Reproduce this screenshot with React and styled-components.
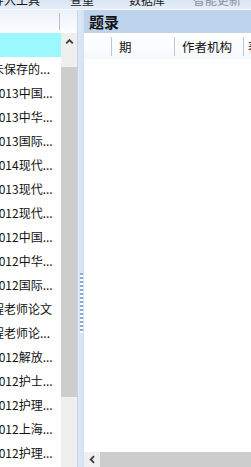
import React from "react";
import styled, { createGlobalStyle } from "styled-components";

const Global = createGlobalStyle`
  html, body { margin: 0; padding: 0; background: #ffffff; overflow: hidden; }
  body { font-family: "Noto Sans CJK SC", "Noto Sans", sans-serif; }
`;

const Window = styled.div`
  width: 251px;
  height: 467px;
  display: flex;
  flex-direction: column;
  overflow: hidden;
  background: #ffffff;
`;

const Toolbar = styled.div`
  height: 9px;
  flex: none;
  display: flex;
  align-items: flex-start;
  background: linear-gradient(#d9e5f4, #e6eef9);
  border-bottom: 1px solid #f4f8fd;
  overflow: hidden;
`;

const ToolItem = styled.span`
  flex: none;
  margin-left: ${(p) => p.$offset}px;
  margin-top: -6px;
  font-size: 12px;
  line-height: 12px;
  white-space: nowrap;
  color: ${(p) => (p.$disabled ? "#8a8f97" : "#1a1a1a")};
`;

const Main = styled.div`
  flex: 1;
  display: flex;
  min-height: 0;
`;

const LeftPane = styled.div`
  width: 77px;
  flex: none;
  display: flex;
  flex-direction: column;
  overflow: hidden;
`;

const LeftHeader = styled.div`
  height: 23px;
  flex: none;
  display: flex;
  align-items: center;
  background: linear-gradient(#edf2f9, #fbfdff);
`;

const HeaderSep = styled.div`
  width: 1px;
  height: 17px;
  margin-left: ${(p) => p.$at}px;
  background: #b4c0d0;
`;

const LeftBody = styled.div`
  flex: 1;
  display: flex;
  min-height: 0;
`;

const List = styled.div`
  width: 61px;
  flex: none;
  display: flex;
  flex-direction: column;
  overflow: hidden;
`;

const Row = styled.div`
  height: 24px;
  flex: none;
  display: flex;
  align-items: center;
  background: ${(p) => (p.$selected ? "#9cf8ff" : "transparent")};
`;

const RowText = styled.span`
  margin-left: -8px;
  font-size: 12px;
  line-height: 24px;
  white-space: nowrap;
  color: #111111;
`;

const VScroll = styled.div`
  width: 16px;
  flex: none;
  display: flex;
  flex-direction: column;
  background: #efefef;
`;

const ArrowButton = styled.div`
  height: ${(p) => p.$h}px;
  width: ${(p) => p.$w || 16}px;
  flex: none;
  display: flex;
  align-items: center;
  justify-content: center;
  background: #efefef;
`;

const VThumb = styled.div`
  margin-top: 17px;
  height: 330px;
  flex: none;
  background: #cdcdcd;
`;

const Splitter = styled.div`
  width: 6px;
  flex: none;
  display: flex;
  flex-direction: column;
  align-items: center;
  border-left: 1px solid #c9d5e6;
  background: linear-gradient(90deg, #dfe9f6, #d3e1f3);
`;

const Grip = styled.div`
  margin-top: 263px;
  width: 3px;
  height: 60px;
  background-image: linear-gradient(#8ea9d6 0 2px, #ffffff 2px 4px);
  background-size: 3px 4px;
`;

const RightPane = styled.div`
  flex: 1;
  display: flex;
  flex-direction: column;
  min-width: 0;
  overflow: hidden;
`;

const TitleBar = styled.div`
  height: 23px;
  flex: none;
  display: flex;
  align-items: center;
  padding-left: 5px;
  background: #bed4ed;
  font-size: 15px;
  font-weight: bold;
  color: #111111;
`;

const ColumnHeader = styled.div`
  height: 26px;
  flex: none;
  display: flex;
  align-items: center;
  background: linear-gradient(#ffffff, #f6f9fc);
  white-space: nowrap;
`;

const Column = styled.div`
  width: ${(p) => p.$w}px;
  flex: none;
  display: flex;
  align-items: center;
  height: 100%;
  overflow: hidden;
`;

const ColSep = styled.div`
  width: 1px;
  height: 19px;
  flex: none;
  background: #bcc7d6;
`;

const ColLabel = styled.span`
  margin-left: ${(p) => p.$pad}px;
  font-size: 12.5px;
  color: #111111;
`;

const Body = styled.div`
  flex: 1;
  background: #ffffff;
`;

const HScroll = styled.div`
  height: 15px;
  flex: none;
  display: flex;
  background: #cdcdcd;
`;

const Chevron = ({ dir }) => (
  <svg width="9" height="9" viewBox="0 0 9 9">
    <path
      d={dir === "up" ? "M1.2 6.3 L4.5 3 L7.8 6.3" : "M6 1.2 L2.7 4.5 L6 7.8"}
      fill="none"
      stroke="#3c3c3c"
      strokeWidth="1.8"
    />
  </svg>
);

const rows = [
  "未保存的...",
  "2013中国...",
  "2013中华...",
  "2013国际...",
  "2014现代...",
  "2013现代...",
  "2012现代...",
  "2012中国...",
  "2012中华...",
  "2012国际...",
  "程老师论文",
  "程老师论...",
  "2012解放...",
  "2012护士...",
  "2012护理...",
  "2012上海...",
  "2012护理...",
];

export default function App() {
  return (
    <>
      <Global />
      <Window>
        <Toolbar>
          <ToolItem $offset={-8}>导入工具</ToolItem>
          <ToolItem $offset={30}>查重</ToolItem>
          <ToolItem $offset={35}>数据库</ToolItem>
          <ToolItem $offset={28} $disabled>
            智能更新
          </ToolItem>
        </Toolbar>
        <Main>
          <LeftPane>
            <LeftHeader>
              <HeaderSep $at={59} />
            </LeftHeader>
            <LeftBody>
              <List>
                <Row $selected />
                {rows.map((r, i) => (
                  <Row key={i}>
                    <RowText>{r}</RowText>
                  </Row>
                ))}
              </List>
              <VScroll>
                <ArrowButton $h={17}>
                  <Chevron dir="up" />
                </ArrowButton>
                <VThumb />
              </VScroll>
            </LeftBody>
          </LeftPane>
          <Splitter>
            <Grip />
          </Splitter>
          <RightPane>
            <TitleBar>题录</TitleBar>
            <ColumnHeader>
              <Column $w={27} />
              <ColSep />
              <Column $w={62}>
                <ColLabel $pad={7}>期</ColLabel>
              </Column>
              <ColSep />
              <Column $w={68}>
                <ColLabel $pad={7}>作者机构</ColLabel>
              </Column>
              <ColSep />
              <Column $w={40}>
                <ColLabel $pad={4}>著者</ColLabel>
              </Column>
            </ColumnHeader>
            <Body />
            <HScroll>
              <ArrowButton $h={15} $w={16}>
                <Chevron dir="left" />
              </ArrowButton>
            </HScroll>
          </RightPane>
        </Main>
      </Window>
    </>
  );
}
